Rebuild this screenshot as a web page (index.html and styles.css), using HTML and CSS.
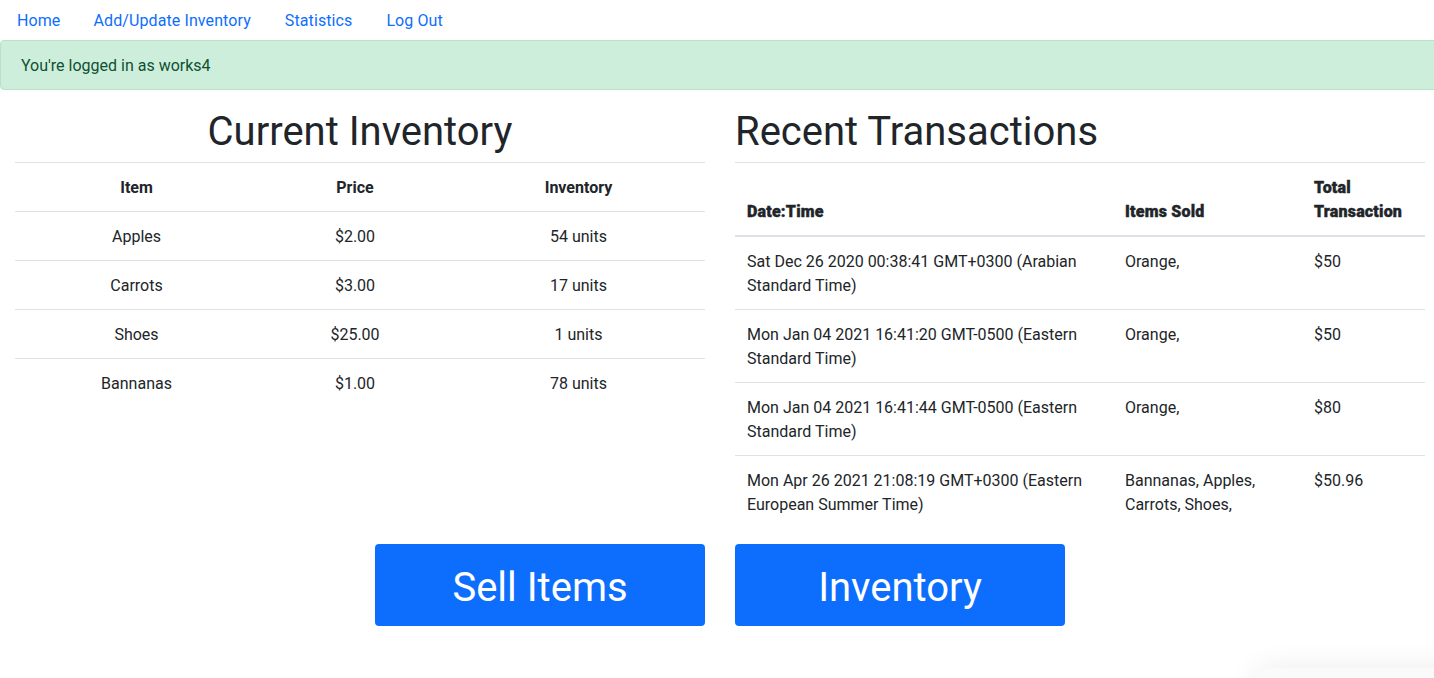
FILE: index.html
```html
<!DOCTYPE html>
<html lang="en">
<head>
<meta charset="utf-8">
<title>Inventory</title>
<link rel="stylesheet" href="styles.css">
</head>
<body>
<nav class="nav">
  <a class="nav-link" href="#">Home</a>
  <a class="nav-link" href="#">Add/Update Inventory</a>
  <a class="nav-link" href="#">Statistics</a>
  <a class="nav-link" href="#">Log Out</a>
</nav>
<div class="alert">You're logged in as works4</div>
<main class="columns">
  <section class="col">
    <h1 class="title center">Current Inventory</h1>
    <table class="table inv">
      <thead>
        <tr><th class="c1">Item</th><th class="c2">Price</th><th class="c3">Inventory</th></tr>
      </thead>
      <tbody>
        <tr><td>Apples</td><td>$2.00</td><td>54 units</td></tr>
        <tr><td>Carrots</td><td>$3.00</td><td>17 units</td></tr>
        <tr><td>Shoes</td><td>$25.00</td><td>1 units</td></tr>
        <tr><td>Bannanas</td><td>$1.00</td><td>78 units</td></tr>
      </tbody>
    </table>
  </section>
  <section class="col">
    <h1 class="title">Recent Transactions</h1>
    <table class="table tx">
      <thead>
        <tr><th class="d1">Date:Time</th><th class="d2">Items Sold</th><th class="d3">Total Transaction</th></tr>
      </thead>
      <tbody>
        <tr><td>Sat Dec 26 2020 00:38:41 GMT+0300 (Arabian Standard Time)</td><td>Orange,</td><td>$50</td></tr>
        <tr><td>Mon Jan 04 2021 16:41:20 GMT-0500 (Eastern Standard Time)</td><td>Orange,</td><td>$50</td></tr>
        <tr><td>Mon Jan 04 2021 16:41:44 GMT-0500 (Eastern Standard Time)</td><td>Orange,</td><td>$80</td></tr>
        <tr><td>Mon Apr 26 2021 21:08:19 GMT+0300 (Eastern European Summer Time)</td><td>Bannanas, Apples, Carrots, Shoes,</td><td>$50.96</td></tr>
      </tbody>
    </table>
  </section>
</main>
<div class="actions">
  <button class="btn">Sell Items</button>
  <button class="btn">Inventory</button>
</div>
<div class="shade"></div>
</body>
</html>
```
FILE: styles.css
```css
* { box-sizing: border-box; }
html, body { margin: 0; padding: 0; }
body {
  font-family: Roboto, "Liberation Sans", sans-serif;
  font-size: 16px;
  line-height: 24px;
  color: #212529;
  background: #fff;
  overflow: hidden;
  height: 678px;
}
.nav {
  display: flex;
}
.nav-link {
  display: block;
  padding: 9px 17px 7px;
  color: #0d6efd;
  text-decoration: none;
  letter-spacing: 0.1px;
}
.nav-link:first-child { padding-right: 16px; }
.alert {
  margin: 0 -4px 16px 0;
  padding: 13px 20px 11px;
  background: #cdeedb;
  border: 1px solid #b8e2c8;
  border-radius: 4px;
  color: #0f5132;
}
.columns {
  display: flex;
  gap: 30px;
  padding-left: 15px;
}
.col { width: 690px; }
.title {
  margin: 0 0 8px;
  padding: 2px 0 0;
  height: 48px;
  font-size: 40px;
  line-height: 48px;
  font-weight: 400;
}
.center { text-align: center; }
.table {
  width: 100%;
  border-collapse: collapse;
}
.table th, .table td {
  padding: 13px 12px 11px;
  border-top: 1px solid #dee2e6;
  vertical-align: top;
}
.table th { font-weight: 700; vertical-align: bottom; }
.inv th, .inv td { text-align: center; }
.inv .c1 { width: 243px; }
.inv .c2 { width: 194px; }
.tx th, .tx td { text-align: left; }
.tx thead th {
  border-bottom: 2px solid #dee2e6;
  font-weight: 900;
  -webkit-text-stroke: 0.4px #212529;
  letter-spacing: 0.2px;
}
.tx .d1 { width: 378px; }
.tx .d2 { width: 189px; }
.actions {
  display: flex;
  gap: 30px;
  padding-left: 375px;
  margin-top: 16px;
}
.btn {
  width: 330px;
  height: 82px;
  padding: 4px 0 0;
  border: 0;
  border-radius: 4px;
  background: #0d6efd;
  color: #fff;
  font-family: inherit;
  font-size: 40px;
  font-weight: 400;
  cursor: pointer;
}
.shade {
  position: fixed;
  right: -40px;
  bottom: -40px;
  width: 220px;
  height: 50px;
  border-radius: 20px;
  box-shadow: 0 0 30px rgba(0,0,0,0.08);
  background: rgba(0,0,0,0.02);
}
```
